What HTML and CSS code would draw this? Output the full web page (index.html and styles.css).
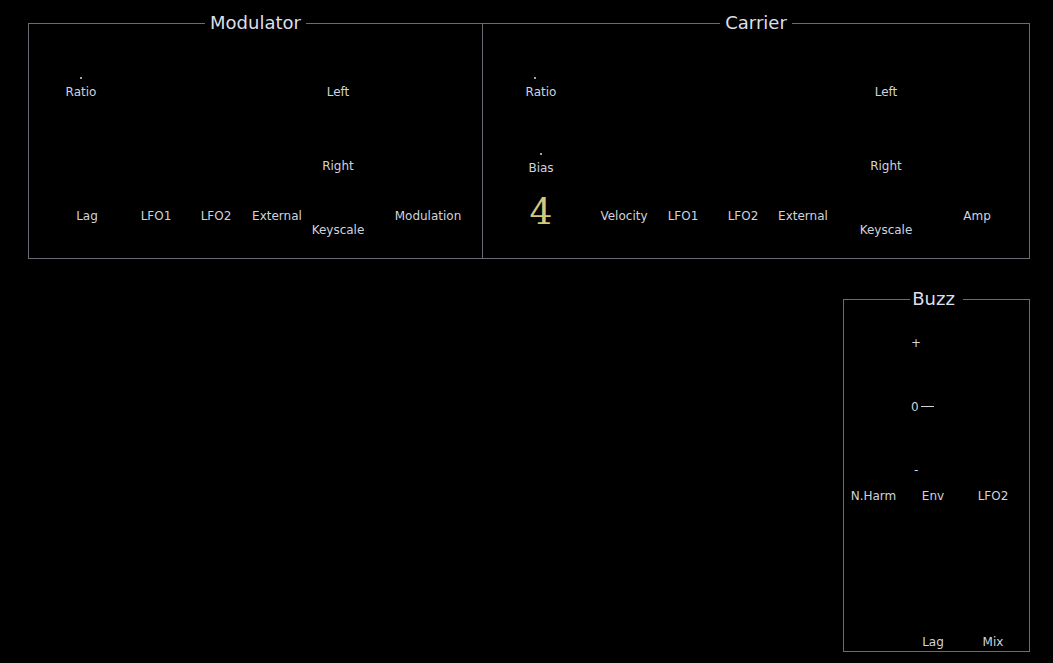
FILE: index.html
```html
<!DOCTYPE html>
<html lang="en">
<head>
    <meta charset="UTF-8">
    <meta name="viewport" content="width=device-width, initial-scale=1.0">
    <title>FM Voice</title>
    <link rel="stylesheet" href="styles.css">
</head>
<body>

    <div class="rack">
        <div class="row">
            <fieldset class="panel mod">
                <legend>Modulator</legend>
                <div class="grid">
                    <div class="knob r1 ratio"><span class="dot"></span><span class="lbl">Ratio</span></div>
                    <div class="knob r1 kcol"><span class="lbl">Left</span></div>
                    <div class="knob r2 kcol up"><span class="lbl">Right</span></div>

                    <div class="foot">Lag</div>
                    <div class="foot">LFO1</div>
                    <div class="foot">LFO2</div>
                    <div class="foot">External</div>
                    <div class="foot low">Keyscale</div>
                    <div class="foot">Modulation</div>
                </div>
            </fieldset>

            <fieldset class="panel car">
                <legend>Carrier</legend>
                <div class="grid">
                    <div class="knob r1"><span class="dot shift"></span><span class="lbl">Ratio</span></div>
                    <div class="knob r2"><span class="dot"></span><span class="lbl">Bias</span></div>
                    <div class="knob r1 kcol"><span class="lbl">Left</span></div>
                    <div class="knob r2 kcol up"><span class="lbl">Right</span></div>

                    <div class="foot big">4</div>
                    <div class="foot">Velocity</div>
                    <div class="foot">LFO1</div>
                    <div class="foot">LFO2</div>
                    <div class="foot">External</div>
                    <div class="foot low">Keyscale</div>
                    <div class="foot">Amp</div>
                </div>
            </fieldset>
        </div>

        <fieldset class="panel buzz">
            <legend>Buzz</legend>
            <div class="buzz-grid">
                <div class="scale">
                    <span>+</span>
                    <span class="zero">0<i class="tick"></i></span>
                    <span class="minus">-</span>
                </div>
                <div class="blbl">N.Harm</div>
                <div class="blbl">Env</div>
                <div class="blbl">LFO2</div>
                <div class="blbl bottom c2">Lag</div>
                <div class="blbl bottom c3">Mix</div>
            </div>
        </fieldset>
    </div>

</body>
</html>
```

FILE: styles.css
```css
* {
    box-sizing: border-box;
}
body {
    margin: 0;
    background: #000;
    color: #cfd3df;
    font-family: "DejaVu Sans", sans-serif;
    font-size: 12px;
}
.rack {
    display: flex;
    flex-direction: column;
    width: 1030px;
    padding: 13px 0 0 28px;
}
.row {
    display: flex;
}

/* panels */
.panel {
    margin: 0;
    padding: 0;
    border: 1px solid #6b6b73;
    min-inline-size: 0;
}
.panel legend {
    margin: 0 auto;
    padding: 0 5px;
    font-size: 18px;
    line-height: 20px;
    color: #dcdfea;
}
.mod {
    width: 455px;
}
.car {
    width: 548px;
    margin-left: -1px;
}

.grid {
    display: grid;
    grid-template-rows: 66px 76px 83px;
}
.mod .grid {
    grid-template-columns: 78px 60px 60px 62px 60px 120px;
    padding-left: 19px;
}
.car .grid {
    grid-template-columns: 108px 58px 60px 60px 60px 106px 76px;
    padding-left: 4px;
}
.mod .kcol {
    grid-column: 5;
}
.car .kcol {
    grid-column: 6;
}

.knob {
    display: flex;
    flex-direction: column;
    align-items: center;
    align-self: end;
    grid-column: 1;
}
.r1 {
    grid-row: 1;
}
.r2 {
    grid-row: 2;
}
.knob.up {
    margin-bottom: 2px;
}
.mod .ratio {
    width: 66px;
}
.dot {
    width: 2px;
    height: 2px;
    background: #9ea3b3;
    margin-bottom: 6px;
}
.dot.shift {
    margin-right: 12px;
}
.lbl {
    line-height: 14px;
}

.foot {
    grid-row: 3;
    align-self: start;
    padding-top: 34px;
    line-height: 14px;
    text-align: center;
    white-space: nowrap;
}
.foot.low {
    padding-top: 48px;
}
.foot.big {
    padding-top: 19px;
    font-family: "DejaVu Serif", serif;
    font-size: 36px;
    line-height: 36px;
    color: #d6c77c;
}

/* buzz */
.buzz {
    width: 187px;
    margin-top: 30px;
    align-self: flex-end;
}
.buzz legend {
    padding: 0 8px 0 2px;
}
.buzz-grid {
    display: grid;
    grid-template-columns: 59px 60px 60px;
    grid-template-rows: 173px 21px 148px;
}
.scale {
    grid-row: 1;
    grid-column: 2;
    align-self: start;
    display: flex;
    flex-direction: column;
    justify-content: space-between;
    height: 168px;
    padding: 27px 0 0 8px;
    line-height: 14px;
}
.scale .zero {
    display: flex;
    align-items: center;
}
.tick {
    width: 13px;
    height: 1px;
    margin-left: 2px;
    background: #cfd3df;
}
.scale .minus {
    padding-left: 3px;
}
.blbl {
    grid-row: 2;
    align-self: end;
    text-align: center;
    line-height: 14px;
}
.blbl.bottom {
    grid-row: 3;
    margin-bottom: 2px;
}
.c2 {
    grid-column: 2;
}
.c3 {
    grid-column: 3;
}
```
